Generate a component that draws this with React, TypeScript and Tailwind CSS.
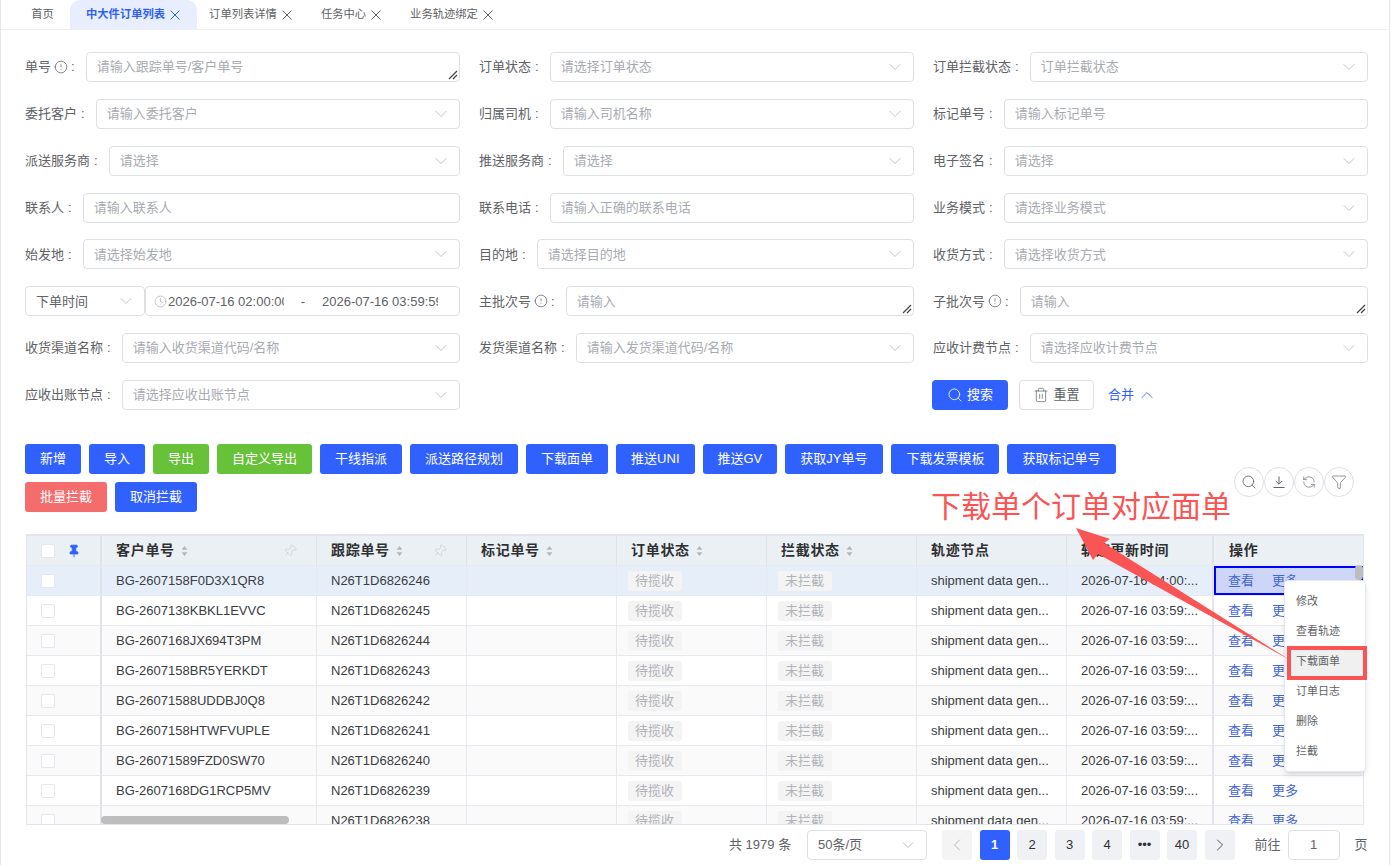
import { ChevronDown, ChevronLeft, ChevronRight, ChevronUp, Clock, Filter, Info, Pin, RefreshCcw, Search, Trash2 } from 'lucide-react'

const tabs = [
    { name: '中大件订单列表', active: true },
    { name: '订单列表详情' },
    { name: '任务中心' },
    { name: '业务轨迹绑定' },
]

const actions = [
    { name: '新增', color: 'bg-[#3061ff]' },
    { name: '导入', color: 'bg-[#3061ff]' },
    { name: '导出', color: 'bg-[#67c23a]' },
    { name: '自定义导出', color: 'bg-[#67c23a]' },
    { name: '干线指派', color: 'bg-[#3061ff]' },
    { name: '派送路径规划', color: 'bg-[#3061ff]' },
    { name: '下载面单', color: 'bg-[#3061ff]' },
    { name: '推送UNI', color: 'bg-[#3061ff]' },
    { name: '推送GV', color: 'bg-[#3061ff]' },
    { name: '获取JY单号', color: 'bg-[#3061ff] pr-4' },
    { name: '下载发票模板', color: 'bg-[#3061ff]' },
    { name: '获取标记单号', color: 'bg-[#3061ff]' },
    { name: '批量拦截', color: 'bg-[#f56c6c]' },
    { name: '取消拦截', color: 'bg-[#3061ff]' },
]

const rows = [
    ['BG-2607158F0D3X1QR8', 'N26T1D6826246', '2026-07-16 04:00:...'],
    ['BG-2607138KBKL1EVVC', 'N26T1D6826245', '2026-07-16 03:59:...'],
    ['BG-2607168JX694T3PM', 'N26T1D6826244', '2026-07-16 03:59:...'],
    ['BG-2607158BR5YERKDT', 'N26T1D6826243', '2026-07-16 03:59:...'],
    ['BG-26071588UDDBJ0Q8', 'N26T1D6826242', '2026-07-16 03:59:...'],
    ['BG-2607158HTWFVUPLE', 'N26T1D6826241', '2026-07-16 03:59:...'],
    ['BG-26071589FZD0SW70', 'N26T1D6826240', '2026-07-16 03:59:...'],
    ['BG-2607168DG1RCP5MV', 'N26T1D6826239', '2026-07-16 03:59:...'],
    ['', 'N26T1D6826238', '2026-07-16 03:59:...'],
]

const menuItems = ['修改', '查看轨迹', '下载面单', '订单日志', '删除', '拦截']

const gridCols = 'grid-cols-[75px_215px_150px_150px_150px_150px_150px_147px_1fr]'

function Label({ text, info }: { text: string; info?: boolean }) {
    return (
        <span className="flex items-center whitespace-nowrap text-[13px] text-[#606266]">
            {text}
            {info && <Info className="ml-[3px] h-[14px] w-[14px] rotate-180" strokeWidth={1.25} />}
            <span className={info ? 'ml-[3px]' : 'ml-1'}>:</span>
        </span>
    )
}

function Arrow() {
    return <ChevronDown className="-mr-[2px] h-5 w-5 shrink-0 text-[#b4b7bd]" strokeWidth={1} />
}

function Box({ text, arrow = true, area }: { text: string; arrow?: boolean; area?: boolean }) {
    return (
        <div className="relative flex h-[30px] min-w-0 flex-1 items-center justify-between rounded-[4px] border border-[#dcdfe6] bg-white px-[10px] text-[13px] text-[#a8abb2]">
            <span className="truncate">{text}</span>
            {arrow && <Arrow />}
            {area && (
                <svg className="absolute bottom-[1px] right-[1px] h-[10px] w-[10px]" viewBox="0 0 10 10">
                    <path d="M1 9 L9 1 M5 9 L9 5" stroke="#444" strokeWidth="1.2" />
                </svg>
            )}
        </div>
    )
}

function Field({ label, text, info, arrow = true, area }: { label: string; text: string; info?: boolean; arrow?: boolean; area?: boolean }) {
    return (
        <div className="flex items-center gap-[11px]">
            <Label text={label} info={info} />
            <Box text={text} arrow={arrow} area={area} />
        </div>
    )
}

function Toolbtn({ children }: { children: React.ReactNode }) {
    return (
        <span className="flex h-[30px] w-[30px] items-center justify-center rounded-full border border-[#dcdfe6] bg-white text-[#606266]">
            {children}
        </span>
    )
}

function SortIcon() {
    return (
        <svg className="ml-[6px] h-[10px] w-[7px]" viewBox="0 0 7 10">
            <path d="M3.5 0 L6.5 3.8 H0.5 Z M3.5 10 L6.5 6.2 H0.5 Z" fill="#b4b7bd" />
        </svg>
    )
}

function HeadCell({ name, sort = true, pin, className = '' }: { name: string; sort?: boolean; pin?: boolean; className?: string }) {
    return (
        <div className={`flex items-center border-r border-[#dfe3e8] px-[14px] text-[14px] font-bold text-[#303133] ${className}`}>
            <span className="whitespace-nowrap tracking-[0.7px]">{name}</span>
            {sort && <SortIcon />}
            {pin && <Pin className="ml-auto mr-[5px] h-[14px] w-[14px] rotate-45 text-[#c8ccd2]" strokeWidth={1.1} />}
        </div>
    )
}

function Tag({ text }: { text: string }) {
    return (
        <span className="rounded-[3px] bg-[#f4f4f5] px-[7.5px] py-[2px] text-[13px] leading-4 text-[#b1b3b8]">{text}</span>
    )
}

function Page({ children, active, muted }: { children: React.ReactNode; active?: boolean; muted?: boolean }) {
    return (
        <span
            className={`flex h-[30px] w-[30px] items-center justify-center rounded-[3px] text-[13px] ${
                active ? 'bg-[#3061ff] font-bold text-white' : muted ? 'bg-[#f4f4f5] text-[#a8abb2]' : 'bg-[#f0f1f5] text-[#303133]'
            }`}
        >
            {children}
        </span>
    )
}

export default function App() {
    return (
        <div className="relative h-[865px] w-[1395px] overflow-hidden bg-white font-['Liberation_Sans','Noto_Sans_CJK_SC',sans-serif]">
            <div className="h-full w-[1390px] border-x border-[#e4e7ed]">
                {/* Tabs */}
                <div className="flex h-[30px] items-end border-b border-[#eef0f3] pl-[14px] text-[11.3px] text-[#606266]">
                    <span className="flex h-[29px] w-[55px] items-center justify-center">首页</span>
                    {tabs.map((tab) => (
                        <span
                            key={tab.name}
                            className={`flex h-[29px] items-center gap-[5px] rounded-t-[10px] pr-[17px] ${
                                tab.active ? 'bg-[#e8eefe] pl-4 font-bold text-[#2f62f2]' : 'pl-3'
                            }`}
                        >
                            {tab.name}
                            <svg className="h-[10px] w-[10px]" viewBox="0 0 10 10">
                                <path d="M0.5 0.5 L9.5 9.5 M9.5 0.5 L0.5 9.5" stroke="currentColor" strokeWidth="1" />
                            </svg>
                        </span>
                    ))}
                </div>

                {/* Search form */}
                <div className="grid grid-cols-3 gap-x-[19px] gap-y-[16.86px] pl-6 pr-[21px] pt-[22px]">
                    <Field label="单号" info text="请输入跟踪单号/客户单号" arrow={false} area />
                    <Field label="订单状态" text="请选择订单状态" />
                    <Field label="订单拦截状态" text="订单拦截状态" />
                    <Field label="委托客户" text="请输入委托客户" />
                    <Field label="归属司机" text="请输入司机名称" />
                    <Field label="标记单号" text="请输入标记单号" arrow={false} />
                    <Field label="派送服务商" text="请选择" />
                    <Field label="推送服务商" text="请选择" />
                    <Field label="电子签名" text="请选择" />
                    <Field label="联系人" text="请输入联系人" arrow={false} />
                    <Field label="联系电话" text="请输入正确的联系电话" arrow={false} />
                    <Field label="业务模式" text="请选择业务模式" />
                    <Field label="始发地" text="请选择始发地" />
                    <Field label="目的地" text="请选择目的地" />
                    <Field label="收货方式" text="请选择收货方式" />
                    <div className="flex">
                        <div className="flex h-[30px] w-[120px] items-center justify-between rounded-[4px] border border-[#dcdfe6] px-[10px] text-[13px] text-[#606266]">
                            下单时间
                            <Arrow />
                        </div>
                        <div className="flex h-[30px] flex-1 items-center rounded-[4px] border border-[#dcdfe6] pl-[8px] text-[13px] text-[#606266]">
                            <Clock className="mr-[1px] h-[13px] w-[13px] shrink-0 text-[#a8abb2]" strokeWidth={1.25} />
                            <span className="w-[116px] overflow-hidden whitespace-nowrap">2026-07-16 02:00:00</span>
                            <span className="w-[38px] text-center">-</span>
                            <span className="w-[116px] overflow-hidden whitespace-nowrap">2026-07-16 03:59:59</span>
                        </div>
                    </div>
                    <Field label="主批次号" info text="请输入" arrow={false} area />
                    <Field label="子批次号" info text="请输入" arrow={false} area />
                    <Field label="收货渠道名称" text="请输入收货渠道代码/名称" />
                    <Field label="发货渠道名称" text="请输入发货渠道代码/名称" />
                    <Field label="应收计费节点" text="请选择应收计费节点" />
                    <Field label="应收出账节点" text="请选择应收出账节点" />
                    <div />
                    <div className="-ml-px flex items-center text-[13px]">
                        <span className="flex h-[30px] w-[76px] items-center justify-center gap-[4px] rounded-[4px] bg-[#3061ff] text-white">
                            <Search className="h-4 w-4" strokeWidth={1.25} />
                            搜索
                        </span>
                        <span className="ml-[11px] flex h-[30px] w-[75px] items-center justify-center gap-[4px] rounded-[4px] border border-[#dcdfe6] text-[#606266]">
                            <Trash2 className="h-4 w-4" strokeWidth={1.1} />
                            重置
                        </span>
                        <span className="ml-[14px] flex items-center gap-[3px] text-[#3061ff]">
                            合并
                            <ChevronUp className="h-5 w-5" strokeWidth={1} />
                        </span>
                    </div>
                </div>

                {/* Actions */}
                <div className="mt-[34px] flex justify-between pl-6 pr-[35px]">
                    <div className="flex w-[1100px] flex-wrap gap-x-2 gap-y-2">
                        {actions.map((action) => (
                            <span
                                key={action.name}
                                className={`flex h-[30px] items-center rounded-[3px] px-[15px] text-[13px] text-white ${action.color}`}
                            >
                                {action.name}
                            </span>
                        ))}
                    </div>
                    <div className="mt-[23px] flex self-start">
                        <Toolbtn><Search className="h-4 w-4" strokeWidth={1.25} /></Toolbtn>
                        <Toolbtn>
                            <svg className="h-[14px] w-[14px]" viewBox="0 0 14 14" fill="none" stroke="currentColor" strokeWidth="1">
                                <path d="M7 1.5 V9 M3.8 6 L7 9.2 L10.2 6 M1.5 12.5 H12.5" />
                            </svg>
                        </Toolbtn>
                        <Toolbtn><RefreshCcw className="h-[14px] w-[14px]" strokeWidth={1.1} /></Toolbtn>
                        <Toolbtn><Filter className="h-4 w-4" strokeWidth={1} /></Toolbtn>
                    </div>
                </div>

                {/* Table */}
                <div className="relative ml-[25px] mt-[22px] h-[291px] w-[1338px] overflow-hidden border-x border-b border-t-2 border-[#e2e6ec]">
                    <div className={`grid h-[29px] bg-[#ebf0f5] ${gridCols}`}>
                        <div className="flex items-center justify-between border-r-2 border-[#dfe3e8] pl-[14px] pr-[19px]">
                            <span className="h-[14px] w-[14px] rounded-[2px] border border-[#e4e7ed] bg-white" />
                            <Pin className="h-[14px] w-[14px] text-[#3061ff]" fill="#3061ff" strokeWidth={1.5} />
                        </div>
                        <HeadCell name="客户单号" pin />
                        <HeadCell name="跟踪单号" pin />
                        <HeadCell name="标记单号" />
                        <HeadCell name="订单状态" />
                        <HeadCell name="拦截状态" />
                        <HeadCell name="轨迹节点" sort={false} />
                        <HeadCell name="轨迹更新时间" sort={false} className="border-r-2" />
                        <HeadCell name="操作" sort={false} className="border-r-0 pl-[15px]" />
                    </div>
                    {rows.map((row, i) => (
                        <div
                            key={row[1]}
                            className={`grid h-[30px] border-t border-[#e6e9ee] text-[13px] text-[#3a3d42] ${gridCols} ${
                                i === 0 ? 'bg-[#e6eefa]' : i % 2 ? 'bg-white' : 'bg-[#fafafa]'
                            }`}
                        >
                            <div className="flex items-center border-r-2 border-[#dfe3e8] pl-[14px]">
                                <span className="h-[14px] w-[14px] rounded-[2px] border border-[#e4e7ed] bg-white" />
                            </div>
                            <div className="flex items-center border-r border-[#e6e9ee] px-[14px]">{row[0]}</div>
                            <div className="flex items-center border-r border-[#e6e9ee] px-[14px]">{row[1]}</div>
                            <div className="border-r border-[#e6e9ee]" />
                            <div className="flex items-center border-r border-[#e6e9ee] px-[10.5px]"><Tag text="待揽收" /></div>
                            <div className="flex items-center border-r border-[#e6e9ee] px-[10.5px]"><Tag text="未拦截" /></div>
                            <div className="flex items-center whitespace-nowrap border-r border-[#e6e9ee] px-[14px]">shipment data gen...</div>
                            <div className="flex items-center overflow-hidden whitespace-nowrap border-r-2 border-[#e2e6ec] pl-[14px]">{row[2]}</div>
                            <div
                                className={`flex items-center gap-[18px] text-[#4566d6] ${
                                    i === 0 ? 'border-2 border-[#0000ff] bg-[#cdd6f7] px-[12px]' : 'px-[14px]'
                                }`}
                            >
                                <span>查看</span>
                                <span>更多</span>
                            </div>
                        </div>
                    ))}
                    {/* scrollbars */}
                    <span className="absolute bottom-0 left-[74px] h-2 w-[188px] rounded bg-[#bdbdbd]" />
                    <span className="absolute right-0 top-[29px] h-[15px] w-2 rounded bg-[#bdbdbd]" />
                </div>

                {/* Pagination */}
                <div className="mt-[5px] flex items-center pl-[728px] text-[13px] text-[#606266]">
                    <span className="w-[78px]">共 1979 条</span>
                    <div className="flex h-[30px] w-[120px] items-center justify-between rounded-[4px] border border-[#dcdfe6] px-[10px]">
                        50条/页
                        <Arrow />
                    </div>
                    <div className="ml-[15px] flex gap-[7.5px]">
                        <Page muted><ChevronLeft className="h-5 w-5" strokeWidth={1} /></Page>
                        <Page active>1</Page>
                        <Page>2</Page>
                        <Page>3</Page>
                        <Page>4</Page>
                        <Page>•••</Page>
                        <Page>40</Page>
                        <Page><ChevronRight className="h-5 w-5" strokeWidth={1} /></Page>
                    </div>
                    <span className="ml-[20px]">前往</span>
                    <span className="ml-[7px] flex h-[30px] w-[52px] items-center justify-center rounded-[4px] border border-[#dcdfe6]">1</span>
                    <span className="ml-[15px]">页</span>
                </div>
            </div>

            {/* More menu */}
            <div className="absolute left-[1284px] top-[580px] w-[82px] rounded-[4px] border border-[#e4e7ed] bg-white py-[5px] text-[11px] text-[#606266] shadow-md">
                {menuItems.map((item) => (
                    <div key={item} className={`flex h-[30px] items-center pl-[11px] ${item === '下载面单' ? 'bg-[#f0f0f0]' : ''}`}>
                        {item}
                    </div>
                ))}
            </div>

            {/* Annotation */}
            <span className="absolute left-[931px] top-[489px] text-[30px] leading-[36px] text-[#fb5454]">下载单个订单对应面单</span>
            <span className="absolute left-[1287px] top-[646px] h-[34px] w-[80px] border-4 border-[#fb5454]" />
            <svg className="pointer-events-none absolute left-0 top-0" width="1395" height="865">
                <polygon points="1076,528 1110,539 1104,543 1290,660 1098,554 1093,560" fill="#fb5454" />
            </svg>
        </div>
    )
}
